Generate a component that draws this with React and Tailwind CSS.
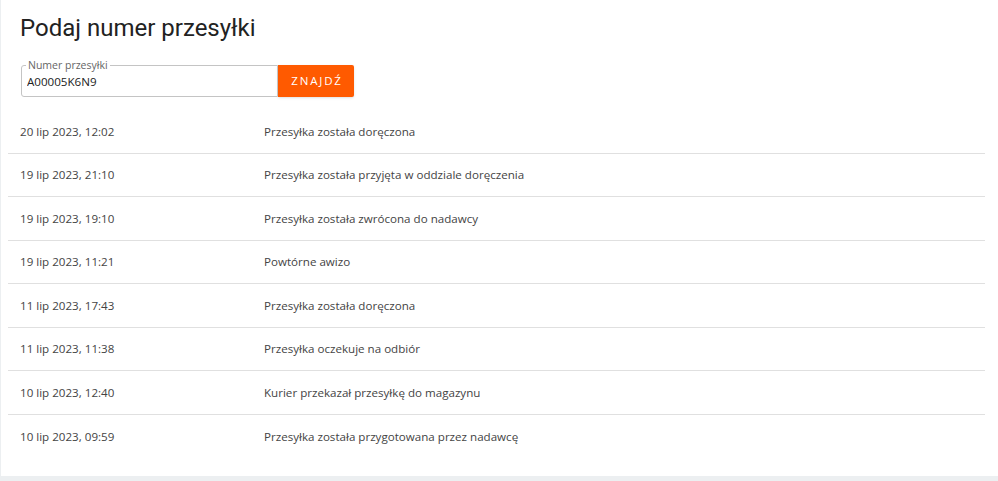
import React, { useState } from "react";

const events = [
  { date: "20 lip 2023, 12:02", text: "Przesyłka została doręczona" },
  { date: "19 lip 2023, 21:10", text: "Przesyłka została przyjęta w oddziale doręczenia" },
  { date: "19 lip 2023, 19:10", text: "Przesyłka została zwrócona do nadawcy" },
  { date: "19 lip 2023, 11:21", text: "Powtórne awizo" },
  { date: "11 lip 2023, 17:43", text: "Przesyłka została doręczona" },
  { date: "11 lip 2023, 11:38", text: "Przesyłka oczekuje na odbiór" },
  { date: "10 lip 2023, 12:40", text: "Kurier przekazał przesyłkę do magazynu" },
  { date: "10 lip 2023, 09:59", text: "Przesyłka została przygotowana przez nadawcę" },
];

const TrackingSearch = () => {
  const [number, setNumber] = useState("A00005K6N9");

  return (
    <div className="flex items-stretch pl-5">
      <div className="relative w-[257px] h-[32px] border border-[#c4c4c4] rounded-l-[3px] flex items-center px-[5px]">
        <span className="absolute left-[4px] -top-[7px] bg-white px-[2px] text-[10.5px] leading-[12px] text-[#666]">
          Numer przesyłki
        </span>
        <input
          value={number}
          onChange={(e) => setNumber(e.target.value)}
          className="w-full mt-[2px] text-[11.6px] text-[#222] outline-none bg-transparent"
        />
      </div>
      <button className="h-[32px] w-[76px] bg-[#ff5a00] text-white text-[11.5px] font-medium tracking-[1.8px] pl-[2px] rounded-r-[2px] shadow-sm">
        ZNAJDŹ
      </button>
    </div>
  );
};

export default function App() {
  return (
    <div className="w-[998px] h-[481px] bg-[#eceff1] pl-px pb-[5px] font-['Open_Sans',sans-serif]">
      <div className="h-full bg-white pt-[12px]">
        <h1 className="pl-[19px] text-[24px] leading-[32px] text-[#222] font-normal font-['Roboto',sans-serif]">
          Podaj numer przesyłki
        </h1>
        <div className="mt-[21px]">
          <TrackingSearch />
        </div>
        <div className="mt-[13px] ml-[7px] w-[977px]">
          {events.map((ev, idx) => (
            <div
              key={idx}
              className={`grid grid-cols-[244px_1fr] items-center h-[43.5px] text-[11.6px] text-[#444] ${
                idx < events.length - 1 ? "border-b border-[#e0e0e0]" : ""
              }`}
            >
              <div className="pl-3">{ev.date}</div>
              <div className="pl-3">{ev.text}</div>
            </div>
          ))}
        </div>
      </div>
    </div>
  );
}
